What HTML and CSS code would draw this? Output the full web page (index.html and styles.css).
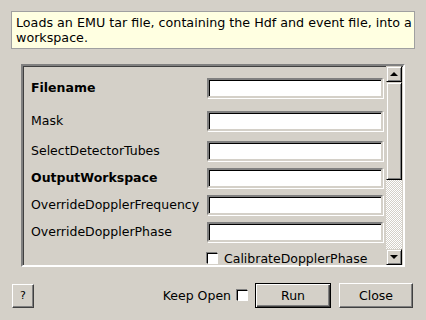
FILE: index.html
```html
<!DOCTYPE html>
<html lang="en">
<head>
    <meta charset="UTF-8">
    <title>LoadEMU input dialog</title>
    <link rel="stylesheet" href="styles.css">
</head>
<body>
    <div class="desc">Loads an EMU tar file, containing the Hdf and event file, into a<br>workspace.</div>
    <div class="frame">
        <div class="props">
            <div class="row r1"><label class="bold">Filename</label><span class="field"></span></div>
            <div class="row r2"><label>Mask</label><span class="field"></span></div>
            <div class="row r3"><label>SelectDetectorTubes</label><span class="field"></span></div>
            <div class="row r4"><label class="bold">OutputWorkspace</label><span class="field"></span></div>
            <div class="row r4"><label>OverrideDopplerFrequency</label><span class="field"></span></div>
            <div class="row r5"><label>OverrideDopplerPhase</label><span class="field"></span></div>
            <div class="row r6"><label></label><span class="check"></span><span class="check-text">CalibrateDopplerPhase</span></div>
        </div>
        <div class="scrollbar">
            <div class="sbtn"><span class="arrow up"></span></div>
            <div class="thumb"></div>
            <div class="track"></div>
            <div class="sbtn"><span class="arrow down"></span></div>
        </div>
    </div>
    <div class="footer">
        <button type="button" class="btn help">?</button>
        <span class="keep">Keep Open</span>
        <span class="check"></span>
        <button type="button" class="btn run">Run</button>
        <button type="button" class="btn close">Close</button>
    </div>
</body>
</html>
```

FILE: styles.css
```css
body {
    margin: 0;
    background-color: #d4d0c8;
    font-family: 'DejaVu Sans', sans-serif;
    font-size: 12.5px;
    color: #000;
    width: 426px;
    height: 320px;
    overflow: hidden;
}
.desc {
    margin: 11px 11px 0 11px;
    height: 30px;
    padding: 3px 0 3px 4px;
    border: 1px solid #a0a0a0;
    background-color: #ffffe1;
    line-height: 15px;
    font-size: 12.7px;
    white-space: nowrap;
    overflow: hidden;
}
.frame {
    display: flex;
    margin: 15px 0 0 21px;
    width: 380px;
    height: 199px;
    border: 2px solid;
    border-color: #808080 #fff #fff #808080;
    box-shadow: inset 1px 1px #404040;
}
.props {
    flex: 1;
    padding: 12px 0 0 8px;
}
.row {
    display: flex;
    align-items: flex-start;
}
.r1 { height: 33px; }
.r2 { height: 30px; }
.r3 { height: 27px; }
.r4 { height: 27px; }
.r5 { height: 30px; }
.row label {
    width: 176px;
    line-height: 20px;
    white-space: nowrap;
}
.bold {
    font-weight: bold;
}
.field {
    display: block;
    width: 172px;
    height: 16px;
    background: #fff;
    border: 2px solid;
    border-color: #808080 #d4d0c8 #d4d0c8 #808080;
    box-shadow: inset 1px 1px #000, 1px 1px #fff;
}
.check {
    display: inline-block;
    width: 9px;
    height: 9px;
    background: #fff;
    border: 1px solid;
    border-color: #000 #fff #fff #000;
    box-shadow: -1px -1px #808080;
    margin-top: 1px;
}
.check-text {
    margin-left: 6px;
    line-height: 13px;
}
.scrollbar {
    width: 16px;
    display: flex;
    flex-direction: column;
    margin-right: 1px;
}
.sbtn, .thumb {
    box-sizing: border-box;
    border: 1px solid;
    border-color: #d4d0c8 #000 #000 #d4d0c8;
    box-shadow: inset 1px 1px #fff, inset -1px -1px #808080;
    background: #d4d0c8;
}
.sbtn {
    height: 16px;
    display: flex;
    align-items: center;
    justify-content: center;
}
.thumb {
    height: 98px;
}
.track {
    flex: 1;
    background: repeating-conic-gradient(#d4d0c8 0 25%, #fff 0 50%) 0 0 / 2px 2px;
}
.arrow {
    width: 0;
    height: 0;
    border-left: 4px solid transparent;
    border-right: 4px solid transparent;
}
.up {
    border-bottom: 4px solid #000;
}
.down {
    border-top: 4px solid #000;
}
.footer {
    display: flex;
    align-items: center;
    margin: 16px 13px 0 12px;
    height: 25px;
}
.btn {
    font-family: 'DejaVu Sans', sans-serif;
    font-size: 12.5px;
    background: #d4d0c8;
    border: 1px solid;
    border-color: #fff #404040 #404040 #fff;
    box-shadow: inset -1px -1px #808080;
    padding: 0;
    color: #000;
}
.help {
    width: 22px;
    height: 24px;
    font-size: 11px;
}
.keep {
    margin-left: auto;
    margin-right: 6px;
}
.footer .check {
    margin: 0 7px 0 0;
}
.run {
    width: 76px;
    height: 25px;
    border: 1px solid #000;
    box-shadow: inset 1px 1px #fff, inset -1px -1px #404040, inset -2px -2px #808080;
}
.close {
    width: 74px;
    height: 25px;
    margin-left: 8px;
}
```
